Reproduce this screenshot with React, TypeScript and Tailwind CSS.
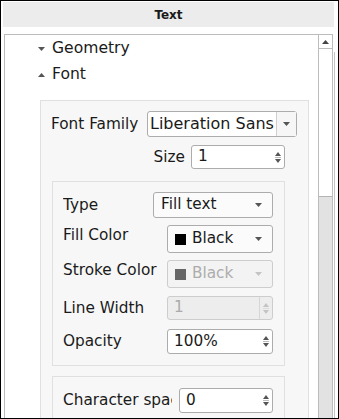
import type { ReactNode } from 'react';

// small triangle used by tree items, combos and spin boxes
function Tri({ dir, color, w = 7, h = 4 }: { dir: 'up' | 'down'; color: string; w?: number; h?: number }) {
  const pts = dir === 'down' ? `0,0 ${w},0 ${w / 2},${h}` : `0,${h} ${w},${h} ${w / 2},0`;
  return (
    <svg width={w} height={h} viewBox={`0 0 ${w} ${h}`} className="block">
      <polygon points={pts} fill={color} />
    </svg>
  );
}

function TreeRow({ open, label }: { open: boolean; label: string }) {
  return (
    <div className="flex h-[26px] items-center pl-[33px]">
      <Tri dir={open ? 'up' : 'down'} color="#555555" />
      <span className="ml-[7px] text-[15.6px] text-[#1a1a1a]">{label}</span>
    </div>
  );
}

interface ComboProps {
  text: string;
  className: string;
  swatch?: boolean;
  disabled?: boolean;
}

function Combo({ text, className, swatch, disabled }: ComboProps) {
  return (
    <div
      className={`flex items-center rounded-[3px] border pl-[7px] pr-[10px] ${
        disabled ? 'border-[#cdcdcd] bg-[#f3f3f3] text-[#acacac]' : 'border-[#acacac] bg-[#fbfbfb] text-[#1a1a1a]'
      } ${className}`}
    >
      {swatch && (
        <span className={`mr-[6px] h-[11px] w-[11px] ${disabled ? 'bg-[#666666]' : 'bg-black'}`} />
      )}
      <span className="flex-1 text-[15.3px] leading-none">{text}</span>
      <Tri dir="down" color={disabled ? '#c4c4c4' : '#555555'} />
    </div>
  );
}

function Spin({ value, className, disabled }: { value: string; className: string; disabled?: boolean }) {
  const c = disabled ? '#c4c4c4' : '#555555';
  return (
    <div
      className={`flex items-stretch rounded-[3px] border ${
        disabled ? 'border-[#cdcdcd] bg-[#ededed] text-[#ababab]' : 'border-[#acacac] bg-white text-[#1a1a1a]'
      } ${className}`}
    >
      <span className="flex flex-1 items-center pl-[6px] text-[15.3px] leading-none">{value}</span>
      <div
        className={`flex w-[13px] flex-col items-center justify-center gap-[1px] ${
          disabled ? 'border-l border-[#d6d6d6]' : ''
        }`}
      >
        <Tri dir="up" color={c} w={6} h={4} />
        <span className={`h-px w-[6px] ${disabled ? 'bg-[#dddddd]' : 'bg-[#bbbbbb]'}`} />
        <Tri dir="down" color={c} w={6} h={4} />
      </div>
    </div>
  );
}

function Label({ children, className }: { children: ReactNode; className: string }) {
  return (
    <span className={`shrink-0 overflow-hidden whitespace-nowrap text-[15.3px] text-[#1a1a1a] ${className}`}>
      {children}
    </span>
  );
}

export default function App() {
  return (
    <div className="flex h-[419px] w-[339px] flex-col overflow-hidden border border-black bg-white font-['DejaVu_Sans',sans-serif]">
      {/* dock title */}
      <div className="ml-[2px] mt-[1px] flex h-[25px] w-[331px] shrink-0 items-center justify-center bg-[#ececec] text-[12px] font-bold text-[#1a1a1a]">
        Text
      </div>

      <div className="ml-[3px] mt-[7px] flex min-h-0 flex-1">
        <div className="flex h-[420px] w-[329px] border border-[#bcbcbc]">
          {/* scroll content */}
          <div className="flex min-w-0 flex-1 flex-col pt-[1px]">
            <TreeRow open={false} label="Geometry" />
            <TreeRow open label="Font" />

            <div className="ml-[35px] mr-[9px] mt-[12px] flex flex-1 flex-col border border-[#e0e0e0] bg-[#f7f7f7] pt-[10px]">
              <div className="flex items-center pl-[10px]">
                <Label className="w-[96px]">Font Family</Label>
                <div className="flex h-[26px] w-[150px] items-stretch rounded-[3px] border border-[#acacac] bg-white">
                  <span className="flex flex-1 items-center pl-[2px] text-[16px] leading-none text-[#1a1a1a]">
                    Liberation Sans
                  </span>
                  <div className="flex w-[20px] items-center justify-center border-l border-[#cfcfcf] bg-[#f6f6f6]">
                    <Tri dir="down" color="#555555" />
                  </div>
                </div>
              </div>

              <div className="mt-[8px] flex items-center">
                <Label className="w-[144px] text-right">Size</Label>
                <Spin value="1" className="ml-[6px] h-[24px] w-[94px]" />
              </div>

              {/* stroke / fill group */}
              <div className="ml-[11px] mt-[12px] flex w-[233px] flex-col border border-[#e0e0e0] bg-[#f7f7f7] pb-[11px] pl-[10px] pt-[10px]">
                <div className="flex items-center">
                  <Label className="w-[90px]">Type</Label>
                  <Combo text="Fill text" className="h-[26px] w-[120px]" />
                </div>
                <div className="mt-[7px] flex items-start">
                  <Label className="w-[104px] leading-[20px]">Fill Color</Label>
                  <Combo text="Black" swatch className="h-[28px] w-[106px]" />
                </div>
                <div className="mt-[7px] flex items-start">
                  <Label className="w-[104px] leading-[20px]">Stroke Color</Label>
                  <Combo text="Black" swatch disabled className="h-[28px] w-[106px]" />
                </div>
                <div className="mt-[8px] flex items-center">
                  <Label className="w-[104px]">Line Width</Label>
                  <Spin value="1" disabled className="h-[24px] w-[106px]" />
                </div>
                <div className="mt-[9px] flex items-center">
                  <Label className="w-[104px]">Opacity</Label>
                  <Spin value="100%" className="h-[25px] w-[106px]" />
                </div>
              </div>

              {/* spacing group */}
              <div className="ml-[11px] mt-[10px] flex w-[233px] flex-1 flex-col border border-[#e0e0e0] bg-[#f7f7f7] pl-[10px] pt-[11px]">
                <div className="flex items-center">
                  <Label className="w-[109px]">Character spacing</Label>
                  <Spin value="0" className="ml-[7px] h-[25px] w-[94px]" />
                </div>
              </div>
            </div>
          </div>

          {/* vertical scrollbar */}
          <div className="flex w-[14px] shrink-0 flex-col border-l border-[#bcbcbc] bg-white">
            <div className="flex h-[14px] items-center justify-center border-b border-[#bcbcbc]">
              <Tri dir="up" color="#444444" />
            </div>
            <div className="h-[147px]" />
            <div className="flex-1 border-t border-[#b4b4b4] bg-[#e2e2e2]" />
          </div>
        </div>
        <div className="ml-[1px] mt-[18px] w-[2px] border-l border-[#c4c4c4]" />
      </div>
    </div>
  );
}
